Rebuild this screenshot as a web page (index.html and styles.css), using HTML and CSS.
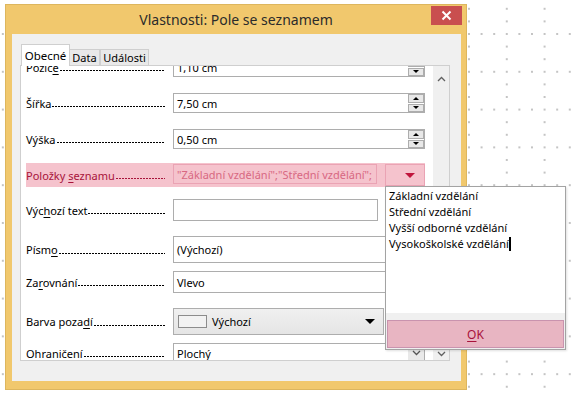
FILE: index.html
```html
<!DOCTYPE html>
<html lang="cs">
<head>
<meta charset="utf-8">
<title>Vlastnosti: Pole se seznamem</title>
<link rel="stylesheet" href="styles.css">
</head>
<body>
<div class="window">
  <div class="titlebar">
    <span></span>
    <span class="title">Vlastnosti: Pole se seznamem</span>
    <div class="close">
      <svg width="11" height="11" viewBox="0 0 11 11"><path d="M1.5 1.5 L9.5 9.5 M9.5 1.5 L1.5 9.5" stroke="#fff" stroke-width="2" fill="none"/></svg>
    </div>
  </div>
  <div class="client">
    <div class="tabs">
      <div class="tab active">Obecné</div>
      <div class="tab t-data">Data</div>
      <div class="tab t-ud">Události</div>
    </div>
    <div class="panel">
      <div class="rows">
        <div class="row r-pozice">
          <div class="label"><span>Pozic<u>e</u></span><span class="dots"></span></div>
          <div class="field full"><span>1,10 cm</span>
            <div class="spin"><div class="sbtn"></div><div class="sbtn"><i class="tri-d"></i></div></div>
          </div>
        </div>
        <div class="row r-20 m16">
          <div class="label"><span>Šířka</span><span class="dots"></span></div>
          <div class="field full"><span>7,50 cm</span>
            <div class="spin"><div class="sbtn"><i class="tri-u"></i></div><div class="sbtn"><i class="tri-d"></i></div></div>
          </div>
        </div>
        <div class="row r-20 m16">
          <div class="label"><span>Výška</span><span class="dots"></span></div>
          <div class="field full"><span>0,50 cm</span>
            <div class="spin"><div class="sbtn"><i class="tri-u"></i></div><div class="sbtn"><i class="tri-d"></i></div></div>
          </div>
        </div>
        <div class="row hl m14">
          <div class="label"><span>Položky <u>s</u>eznamu</span><span class="dots"></span></div>
          <div class="field pinkfield"><span>"Základní vzdělání";"Střední vzdělání";</span></div>
          <div class="pinkbtn"><i class="tri-red"></i></div>
        </div>
        <div class="row r-22 m12">
          <div class="label"><span>Výc<u>h</u>ozí text</span><span class="dots"></span></div>
          <div class="field short"></div>
        </div>
        <div class="row r-27 m15">
          <div class="label"><span>Písm<u>o</u></span><span class="dots"></span></div>
          <div class="field full"><span>(Výchozí)</span></div>
        </div>
        <div class="row r-22 m8">
          <div class="label"><span>Za<u>r</u>ovnání</span><span class="dots"></span></div>
          <div class="field full"><span>Vlevo</span></div>
        </div>
        <div class="row r-27 m15">
          <div class="label"><span>Barva poza<u>d</u>í</span><span class="dots"></span></div>
          <div class="colorbtn"><span class="swatch"></span><span class="cname">Výchozí</span><i class="tri-black"></i></div>
        </div>
        <div class="row r-20 m8">
          <div class="label"><span>Ohraničen<u>í</u></span><span class="dots"></span></div>
          <div class="field full"><span>Plochý</span>
            <div class="ddbtn"><svg width="9" height="6" viewBox="0 0 9 6"><path d="M1 1 L4.5 4.5 L8 1" stroke="#555" stroke-width="1.3" fill="none"/></svg></div>
          </div>
        </div>
      </div>
      <div class="scrollbar">
        <svg width="9" height="6" viewBox="0 0 9 6"><path d="M1 5 L4.5 1.5 L8 5" stroke="#606060" stroke-width="1.3" fill="none"/></svg>
        <svg width="9" height="6" viewBox="0 0 9 6"><path d="M1 1 L4.5 4.5 L8 1" stroke="#606060" stroke-width="1.3" fill="none"/></svg>
      </div>
    </div>
  </div>
</div>
<div class="popup">
  <div class="list">
    <div>Základní vzdělání</div>
    <div>Střední vzdělání</div>
    <div>Vyšší odborné vzdělání</div>
    <div>Vysokoškolské vzdělání<span class="caret"></span></div>
  </div>
  <div class="ok"><span><u>O</u>K</span></div>
</div>
</body>
</html>
```
FILE: styles.css
```css
html, body { margin: 0; }
body {
  width: 575px;
  height: 398px;
  box-sizing: border-box;
  padding: 4px 0 0 5px;
  overflow: hidden;
  position: relative;
  font-family: "Noto Sans", "Open Sans", sans-serif;
  font-size: 11px;
  color: #000;
  background-color: #fff;
  background-image:
    radial-gradient(circle, #b4b4b4 0.6px, transparent 1.1px),
    radial-gradient(circle, #b4b4b4 0.6px, transparent 1.1px),
    radial-gradient(circle, #b4b4b4 0.6px, transparent 1.1px),
    radial-gradient(circle, #b4b4b4 0.6px, transparent 1.1px),
    radial-gradient(circle, #b4b4b4 0.6px, transparent 1.1px);
  background-size: 37.8px 37.8px;
  background-position: 450.1px 15.1px, 462.7px 15.1px, 475.3px 15.1px, 450.1px 27.7px, 450.1px 40.3px;
}

.window {
  box-sizing: border-box;
  width: 462px;
  height: 386px;
  background: #F1C86D;
  border: 1px solid #DDB65E;
  display: flex;
  flex-direction: column;
}

.titlebar {
  height: 29px;
  padding: 0 4px;
  display: grid;
  grid-template-columns: 1fr auto 1fr;
  align-items: center;
}
.title {
  font-size: 14px;
  color: #2b2b2b;
  line-height: 20px;
}
.close {
  justify-self: end;
  align-self: start;
  margin-top: 1px;
  width: 31px;
  height: 19px;
  background: #C94F4F;
  display: flex;
  align-items: center;
  justify-content: center;
}

.client {
  flex: 1;
  margin: 0 5px 8px 6px;
  background: #F0F0F0;
  padding: 10px 0 0 8px;
}

.tabs {
  display: flex;
  align-items: flex-end;
  height: 21px;
  margin-left: 1px;
}
.tab {
  box-sizing: border-box;
  height: 16px;
  border: 1px solid #CFCFCF;
  border-bottom: none;
  background: #E9E9E9;
  display: flex;
  align-items: center;
  justify-content: center;
  line-height: 14px;
  white-space: nowrap;
}
.tab.active {
  width: 49px;
  height: 22px;
  margin-bottom: -1px;
  background: #fff;
  position: relative;
  z-index: 1;
  padding-top: 1px;
  font-size: 11.5px;
}
.t-data { width: 30px; border-left: none; }
.t-ud { width: 49px; border-left: 1px solid #CFCFCF; }

.panel {
  box-sizing: border-box;
  width: 430px;
  height: 296px;
  border: 1px solid #CFCFCF;
  background: #fff;
  display: flex;
}
.rows {
  flex: 1;
  overflow: hidden;
  padding: 0 8px 0 5px;
}
.scrollbar {
  width: 16px;
  background: #F0F0F0;
  display: flex;
  flex-direction: column;
  justify-content: space-between;
  align-items: center;
  padding: 10px 0 3px;
  box-sizing: border-box;
}

.row {
  display: flex;
  align-items: center;
}
.r-pozice { height: 20px; margin-top: -9px; }
.r-20 { height: 20px; }
.r-22 { height: 22px; }
.r-27 { height: 27px; }
.m16 { margin-top: 16px; }
.m15 { margin-top: 15px; }
.m14 { margin-top: 14px; }
.m12 { margin-top: 12px; }
.m8 { margin-top: 8px; }

.label {
  width: 139px;
  flex: none;
  display: flex;
  align-items: center;
  line-height: 15px;
  white-space: nowrap;
  margin-right: 8px;
}
.label u { text-underline-offset: 2px; }
.dots {
  flex: 1;
  height: 15px;
  margin-left: 1px;
  background-image: radial-gradient(circle at 1px 1.5px, currentColor 0.6px, transparent 1.05px);
  background-size: 3px 3px;
  background-repeat: repeat-x;
  background-position: 0 9.5px;
}

.field {
  box-sizing: border-box;
  height: 100%;
  border: 1px solid #ADADAD;
  background: #fff;
  display: flex;
  align-items: center;
  padding-left: 3px;
  white-space: nowrap;
  overflow: hidden;
}
.full { flex: 1; }
.short { width: 205px; }

.spin {
  margin-left: auto;
  width: 16px;
  height: 100%;
  display: flex;
  flex-direction: column;
  gap: 1px;
}
.sbtn {
  flex: 1;
  box-sizing: border-box;
  border: 1px solid #ADADAD;
  background: #E8E8E8;
  display: flex;
  align-items: center;
  justify-content: center;
}
.tri-u, .tri-d, .tri-red, .tri-black {
  display: block;
  width: 0;
  height: 0;
  border-left: 3px solid transparent;
  border-right: 3px solid transparent;
}
.tri-u { border-bottom: 3px solid #000; }
.tri-d { border-top: 3px solid #000; }

.hl {
  height: 24px;
  background: #F5C3CD;
  color: #A8133A;
}
.pinkfield {
  width: 204px;
  height: 20px;
  align-self: flex-start;
  margin-top: 1px;
  background: #F5C3CD;
  border-color: #EAA3B4;
  color: #D86882;
}
.pinkbtn {
  box-sizing: border-box;
  width: 40px;
  height: 22px;
  margin-left: 8px;
  align-self: flex-start;
  margin-top: 1px;
  border: 1px solid #EAA3B4;
  display: flex;
  align-items: center;
  justify-content: flex-end;
  padding-right: 9px;
}
.tri-red {
  border-left-width: 5px;
  border-right-width: 5px;
  border-top: 5px solid #C0143C;
}

.colorbtn {
  box-sizing: border-box;
  width: 211px;
  height: 100%;
  border: 1px solid #ADADAD;
  background: linear-gradient(#F0F0F0, #E5E5E5);
  display: flex;
  align-items: center;
  padding: 0 8px 0 4px;
}
.swatch {
  box-sizing: border-box;
  width: 29px;
  height: 13px;
  border: 1px solid #8C8C8C;
  background: #F2F2F2;
}
.cname { margin-left: 5px; flex: 1; }
.tri-black {
  border-left-width: 5px;
  border-right-width: 5px;
  border-top: 5px solid #000;
}

.ddbtn {
  margin-left: auto;
  width: 16px;
  height: 100%;
  background: #E9E9E9;
  display: flex;
  align-items: center;
  justify-content: center;
}

.popup {
  position: absolute;
  left: 385px;
  top: 186px;
  width: 181px;
  height: 164px;
  box-sizing: border-box;
  border: 1px solid #A3A3A3;
  background: #F0F0F0;
  display: flex;
  flex-direction: column;
  box-shadow: 1px 1px 2px rgba(0,0,0,0.12);
}
.list {
  height: 126px;
  box-sizing: border-box;
  background: #fff;
  padding: 1px 3px;
  line-height: 16px;
  white-space: nowrap;
}
.caret {
  display: inline-block;
  width: 2px;
  height: 14px;
  background: #000;
  vertical-align: -3px;
}
.ok {
  box-sizing: border-box;
  margin: 7px 1px 1px;
  height: 28px;
  border: 1px solid #C993AE;
  background: #E8B5C2;
  color: #A8123A;
  display: flex;
  align-items: center;
  justify-content: center;
  font-size: 12px;
}
.ok u { text-underline-offset: 2px; }
```
